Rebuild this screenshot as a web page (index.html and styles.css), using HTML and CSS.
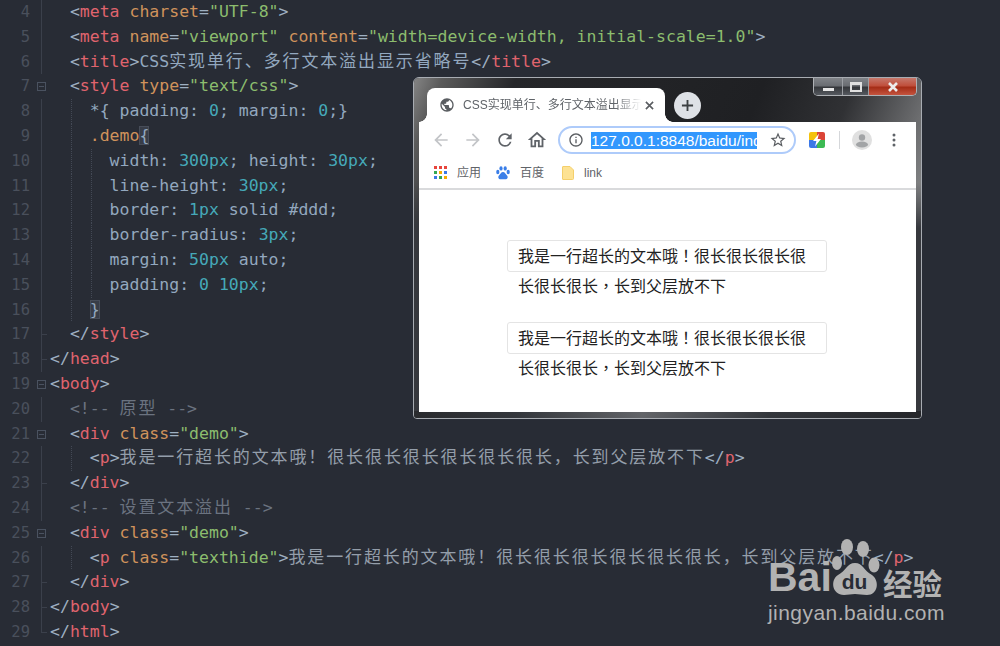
FILE: index.html
```html
<!DOCTYPE html>
<html lang="zh">
<head>
<meta charset="UTF-8">
<title>CSS实现单行、多行文本溢出显示省略号</title>
<link rel="stylesheet" href="styles.css">
</head>
<body>
<main class="editor">
<div class="row"><span class="ln">4</span><span class="fold f-line"></span><code class="src">  <i class="p">&lt;</i><i class="t">meta</i> <i class="a">charset</i><i class="p">=</i><i class="s">"UTF-8"</i><i class="p">&gt;</i></code></div>
<div class="row"><span class="ln">5</span><span class="fold f-line"></span><code class="src">  <i class="p">&lt;</i><i class="t">meta</i> <i class="a">name</i><i class="p">=</i><i class="s">"viewport"</i> <i class="a">content</i><i class="p">=</i><i class="s">"width=device-width, initial-scale=1.0"</i><i class="p">&gt;</i></code></div>
<div class="row"><span class="ln">6</span><span class="fold f-line"></span><code class="src">  <i class="p">&lt;</i><i class="t">title</i><i class="p">&gt;</i><i class="x">CSS<span class="cn">实现单行、多行文本溢出显示省略号</span></i><i class="p">&lt;/</i><i class="t">title</i><i class="p">&gt;</i></code></div>
<div class="row"><span class="ln">7</span><span class="fold f-box"></span><code class="src">  <i class="p">&lt;</i><i class="t">style</i> <i class="a">type</i><i class="p">=</i><i class="s">"text/css"</i><i class="p">&gt;</i></code></div>
<div class="row g1"><span class="ln">8</span><span class="fold f-line"></span><code class="src">    <i class="x">*{ padding: </i><i class="n">0</i><i class="x">; margin: </i><i class="n">0</i><i class="x">;}</i></code></div>
<div class="row g1"><span class="ln">9</span><span class="fold f-line"></span><code class="src">    <i class="a">.demo</i><i class="x match">{</i></code></div>
<div class="row g2"><span class="ln">10</span><span class="fold f-line"></span><code class="src">      <i class="x">width: </i><i class="n">300px</i><i class="x">; height: </i><i class="n">30px</i><i class="x">;</i></code></div>
<div class="row g2"><span class="ln">11</span><span class="fold f-line"></span><code class="src">      <i class="x">line-height: </i><i class="n">30px</i><i class="x">;</i></code></div>
<div class="row g2"><span class="ln">12</span><span class="fold f-line"></span><code class="src">      <i class="x">border: </i><i class="n">1px</i><i class="x"> solid #ddd;</i></code></div>
<div class="row g2"><span class="ln">13</span><span class="fold f-line"></span><code class="src">      <i class="x">border-radius: </i><i class="n">3px</i><i class="x">;</i></code></div>
<div class="row g2"><span class="ln">14</span><span class="fold f-line"></span><code class="src">      <i class="x">margin: </i><i class="n">50px</i><i class="x"> auto;</i></code></div>
<div class="row g2"><span class="ln">15</span><span class="fold f-line"></span><code class="src">      <i class="x">padding: </i><i class="n">0 10px</i><i class="x">;</i></code></div>
<div class="row g1"><span class="ln">16</span><span class="fold f-line"></span><code class="src">    <i class="x match">}</i></code></div>
<div class="row"><span class="ln">17</span><span class="fold f-tick"></span><code class="src">  <i class="p">&lt;/</i><i class="t">style</i><i class="p">&gt;</i></code></div>
<div class="row"><span class="ln">18</span><span class="fold f-end"></span><code class="src"><i class="p">&lt;/</i><i class="t">head</i><i class="p">&gt;</i></code></div>
<div class="row"><span class="ln">19</span><span class="fold f-box"></span><code class="src"><i class="p">&lt;</i><i class="t">body</i><i class="p">&gt;</i></code></div>
<div class="row"><span class="ln">20</span><span class="fold f-line"></span><code class="src">  <i class="c">&lt;!-- <span class="cn">原型</span> --&gt;</i></code></div>
<div class="row"><span class="ln">21</span><span class="fold f-box"></span><code class="src">  <i class="p">&lt;</i><i class="t">div</i> <i class="a">class</i><i class="p">=</i><i class="s">"demo"</i><i class="p">&gt;</i></code></div>
<div class="row g1"><span class="ln">22</span><span class="fold f-line"></span><code class="src">    <i class="p">&lt;</i><i class="t">p</i><i class="p">&gt;</i><i class="z cn">我是一行超长的文本哦！很长很长很长很长很长很长，长到父层放不下</i><i class="p">&lt;/</i><i class="t">p</i><i class="p">&gt;</i></code></div>
<div class="row"><span class="ln">23</span><span class="fold f-tick"></span><code class="src">  <i class="p">&lt;/</i><i class="t">div</i><i class="p">&gt;</i></code></div>
<div class="row"><span class="ln">24</span><span class="fold f-line"></span><code class="src">  <i class="c">&lt;!-- <span class="cn">设置文本溢出</span> --&gt;</i></code></div>
<div class="row"><span class="ln">25</span><span class="fold f-box"></span><code class="src">  <i class="p">&lt;</i><i class="t">div</i> <i class="a">class</i><i class="p">=</i><i class="s">"demo"</i><i class="p">&gt;</i></code></div>
<div class="row g1"><span class="ln">26</span><span class="fold f-line"></span><code class="src">    <i class="p">&lt;</i><i class="t">p</i> <i class="a">class</i><i class="p">=</i><i class="s">"texthide"</i><i class="p">&gt;</i><i class="z cn">我是一行超长的文本哦！很长很长很长很长很长很长，长到父层放不下</i><i class="p">&lt;/</i><i class="t">p</i><i class="p">&gt;</i></code></div>
<div class="row"><span class="ln">27</span><span class="fold f-tick"></span><code class="src">  <i class="p">&lt;/</i><i class="t">div</i><i class="p">&gt;</i></code></div>
<div class="row"><span class="ln">28</span><span class="fold f-end"></span><code class="src"><i class="p">&lt;/</i><i class="t">body</i><i class="p">&gt;</i></code></div>
<div class="row"><span class="ln">29</span><span class="fold f-last"></span><code class="src"><i class="p">&lt;/</i><i class="t">html</i><i class="p">&gt;</i></code></div>
</main>

<section class="window">
  <div class="controls">
    <span class="ctl ctl-min"><b class="min-glyph"></b></span>
    <span class="ctl ctl-max"><b class="max-glyph"></b></span>
    <span class="ctl ctl-close"><svg class="close-glyph" viewBox="0 0 12 10"><path d="M2 1l8 8M10 1l-8 8"/></svg></span>
  </div>
  <div class="tabstrip">
    <div class="tab">
      <svg class="globe" viewBox="0 0 24 24"><path d="M12 2C6.48 2 2 6.48 2 12s4.48 10 10 10 10-4.48 10-10S17.52 2 12 2zm-1 17.93c-3.95-.49-7-3.85-7-7.93 0-.62.08-1.21.21-1.79L9 15v1c0 1.1.9 2 2 2v1.93zm6.9-2.54c-.26-.81-1-1.39-1.9-1.39h-1v-3c0-.55-.45-1-1-1H8v-2h2c.55 0 1-.45 1-1V7h2c1.1 0 2-.9 2-2v-.41c2.93 1.19 5 4.06 5 7.41 0 2.08-.8 3.97-2.1 5.39z"/></svg>
      <span class="tab-title">CSS实现单行、多行文本溢出显示省略号</span>
      <svg class="tab-x" viewBox="0 0 10 10"><path d="M1 1l8 8M9 1l-8 8"/></svg>
    </div>
    <div class="newtab"><svg viewBox="0 0 14 14"><path d="M7 1v12M1 7h12"/></svg></div>
  </div>
  <div class="toolbar">
    <span class="tb"><svg class="ic dim" viewBox="0 0 24 24"><path d="M20 11H7.83l5.59-5.59L12 4l-8 8 8 8 1.41-1.41L7.83 13H20v-2z"/></svg></span>
    <span class="tb"><svg class="ic dim" viewBox="0 0 24 24"><path d="M4 11h12.17l-5.59-5.59L12 4l8 8-8 8-1.41-1.41L16.17 13H4v-2z"/></svg></span>
    <span class="tb"><svg class="ic" viewBox="0 0 24 24"><path d="M17.65 6.35A7.958 7.958 0 0 0 12 4c-4.42 0-7.99 3.58-7.99 8s3.57 8 7.99 8c3.73 0 6.84-2.55 7.73-6h-2.08A5.99 5.99 0 0 1 12 18c-3.31 0-6-2.69-6-6s2.69-6 6-6c1.66 0 3.14.69 4.22 1.78L13 11h7V4l-2.35 2.35z"/></svg></span>
    <span class="tb"><svg class="ic ic-home" viewBox="0 0 24 24"><path d="M12 5.69l5 4.5V18h-2v-6H9v6H7v-7.81l5-4.5M12 3L2 12h3v8h6v-6h2v6h6v-8h3L12 3z"/></svg></span>
    <div class="omni">
      <svg class="ic-s" viewBox="0 0 24 24"><path d="M11 7h2v2h-2zm0 4h2v6h-2zm1-9C6.48 2 2 6.48 2 12s4.48 10 10 10 10-4.48 10-10S17.52 2 12 2zm0 18c-4.41 0-8-3.59-8-8s3.59-8 8-8 8 3.59 8 8-3.59 8-8 8z"/></svg>
      <span class="url"><span class="url-sel">127.0.0.1:8848/baidu/index.html</span></span>
      <svg class="ic-star" viewBox="0 0 24 24"><path d="M22 9.24l-7.19-.62L12 2 9.19 8.63 2 9.24l5.46 4.73L5.82 21 12 17.27 18.18 21l-1.63-7.03L22 9.24zM12 15.4l-3.76 2.27 1-4.28-3.32-2.88 4.38-.38L12 6.1l1.71 4.04 4.38.38-3.32 2.88 1 4.28L12 15.4z"/></svg>
    </div>
    <span class="tb tb-ext"><svg class="ext" viewBox="0 0 16 16"><rect class="e-y" width="8" height="8"/><rect class="e-r" x="8" width="8" height="8"/><rect class="e-b" y="8" width="8" height="8"/><rect class="e-g" x="8" y="8" width="8" height="8"/><path class="e-w" d="M10 1.5L4 9h3.4L6 14.5 12 7H8.6z"/></svg></span>
    <span class="sep"></span>
    <span class="tb"><svg class="avatar" viewBox="0 0 20 20"><circle class="av-bg" cx="10" cy="10" r="10"/><circle class="av-fg" cx="10" cy="7.5" r="3.2"/><ellipse class="av-fg" cx="10" cy="14.5" rx="6" ry="3"/></svg></span>
    <span class="tb"><svg class="dots" viewBox="0 0 4 14"><circle cx="2" cy="2" r="1.5"/><circle cx="2" cy="7" r="1.5"/><circle cx="2" cy="12" r="1.5"/></svg></span>
  </div>
  <div class="bookmarks">
    <span class="bm">
      <svg class="apps" viewBox="0 0 13 13"><rect class="k-r" width="3" height="3"/><rect class="k-r" x="5" width="3" height="3"/><rect class="k-r" x="10" width="3" height="3"/><rect class="k-g" y="5" width="3" height="3"/><rect class="k-y" x="5" y="5" width="3" height="3"/><rect class="k-b" x="10" y="5" width="3" height="3"/><rect class="k-b" y="10" width="3" height="3"/><rect class="k-g" x="5" y="10" width="3" height="3"/><rect class="k-y" x="10" y="10" width="3" height="3"/></svg>
      <span>应用</span>
    </span>
    <span class="bm">
      <svg class="bpaw" viewBox="0 0 14 14"><ellipse cx="5" cy="2.4" rx="1.6" ry="2.2"/><ellipse cx="9.2" cy="2.4" rx="1.6" ry="2.2"/><ellipse cx="1.8" cy="6" rx="1.6" ry="2.2"/><ellipse cx="12.2" cy="6" rx="1.6" ry="2.2"/><path d="M7 6c-2 0-2.4 2-4 3.4C1.6 10.800 2.400 13.500 5 13.300c1-.1 3-.1 4 0 2.600.2 3.400-2.500 2-3.900C9.400 8 9 6 7 6z"/></svg>
      <span>百度</span>
    </span>
    <span class="bm">
      <svg class="folder" viewBox="0 0 12 14"><path class="fo-b" d="M1 .5h7l3.500 3.500v8.500a1 1 0 0 1-1 1H1a.5.5 0 0 1-.5-.5V1A.5.5 0 0 1 1 .5z"/></svg>
      <span>link</span>
    </span>
  </div>
  <div class="page" lang="zh-TW">
    <div class="demo"><p>我是一行超长的文本哦！很长很长很长很长很长很长，长到父层放不下</p></div>
    <div class="demo"><p>我是一行超长的文本哦！很长很长很长很长很长很长，长到父层放不下</p></div>
  </div>
</section>

<aside class="wm">
  <div class="wm-top">
    <span class="wm-bai">Bai</span>
    <svg class="wm-paw" viewBox="0 0 50 58">
      <ellipse cx="17" cy="8" rx="6" ry="8"/><ellipse cx="33" cy="10" rx="6" ry="8"/><ellipse cx="44" cy="26" rx="5.500" ry="7.500"/><ellipse cx="7" cy="24" rx="5" ry="7"/>
      <path d="M25 24c-8 0-9 8-17 12C0 41 2 56 14 56c4 0 7-1 11-1s7 1 12 1c11 0 13-14 5-20-8-4-9-12-17-12z"/>
      <text class="wm-du" x="24.500" y="50" text-anchor="middle">du</text>
    </svg>
    <span class="wm-cn">经验</span>
  </div>
  <div class="wm-url">jingyan.baidu.com</div>
</aside>
</body>
</html>
```
FILE: styles.css
```css
html, body { margin: 0; padding: 0; height: 100%; overflow: hidden; background: #282c35; }
body { position: relative; font-family: "Liberation Sans", "Noto Sans CJK SC", sans-serif; }
p { margin: 0; }

/* editor */
.editor { font-family: "DejaVu Sans Mono", "Noto Sans CJK SC", monospace; font-size: 16.5px; line-height: 24.8px; }
.row { display: flex; height: 24.8px; }
.ln { width: 30px; text-align: right; color: #4a505c; box-sizing: border-box; font-size: 15.500px; }
.fold { width: 20px; flex: none; position: relative; }
.f-line::before, .f-tick::before, .f-end::before, .f-last::before { content: ""; position: absolute; left: 11px; top: 0; bottom: 0; width: 1px; background: #3b404b; }
.f-last::before { bottom: 12px; }
.f-tick::after, .f-end::after, .f-last::after { content: ""; position: absolute; left: 11px; top: 12px; width: 6px; height: 1px; background: #3b404b; }
.f-box::before { content: ""; position: absolute; left: 7px; top: 8px; width: 7px; height: 7px; border: 1px solid #4a5260; background: linear-gradient(#4a5260, #4a5260) center / 5px 1px no-repeat; }
.src { flex: 1; font: inherit; white-space: pre; }
.src i { font-style: normal; }
.g1 .src { background: repeating-linear-gradient(#434955 0 1px, transparent 1px 2px) 21px 0 / 1px 100% no-repeat; }
.g2 .src { background: repeating-linear-gradient(#434955 0 1px, transparent 1px 2px) 21px 0 / 1px 100% no-repeat, repeating-linear-gradient(#434955 0 1px, transparent 1px 2px) 41px 0 / 1px 100% no-repeat; }
.p { color: #9fb0c2; }
.t { color: #e0646e; }
.a { color: #d0935c; }
.s { color: #8cbd6e; }
.x { color: #93a8bf; }
.n { color: #45a9b9; }
.c { color: #6b7380; }
.z { color: #949eaa; }
.cn { font-family: "Noto Sans CJK SC", sans-serif; font-size: 17px; letter-spacing: 1.88px; line-height: 1; }
.match { background: #383d48; outline: 1px solid #474d59; outline-offset: -1px; }

/* browser window */
.window { position: absolute; left: 413px; top: 77px; width: 509px; height: 342px; box-sizing: border-box; padding: 10px 5px 6px; border: 1px solid #a8acb2; border-radius: 6px 6px 4px 4px; display: flex; flex-direction: column; overflow: hidden; background: #36383d; }
.window::before { content: ""; position: absolute; left: 0; right: 0; top: 0; height: 150px; background: linear-gradient(112deg, #858585 0, #5a5a5a 5%, #26272a 18%, #1f2023 62%, #303134 78%, #6d6e70 92%, #8c8d8e 100%); -webkit-mask-image: linear-gradient(#000 70%, transparent); mask-image: linear-gradient(#000 70%, transparent); }
.window::after { content: ""; position: absolute; left: 0; right: 0; bottom: 0; height: 7px; background: linear-gradient(90deg, #2a2b2e 0, #33363b 20%, #626468 45%, #33363b 70%, #25262a 100%); }
.window > * { position: relative; z-index: 1; }
.controls { position: absolute; right: 4px; top: 0; height: 18px; display: flex; z-index: 2; border: 1px solid #aeb1b5; border-top: 0; border-radius: 0 0 5px 5px; overflow: hidden; box-sizing: border-box; }
.ctl { display: flex; align-items: center; justify-content: center; height: 100%; box-sizing: border-box; border-right: 1px solid #9b9ea3; background: linear-gradient(#808388 0, #6a6d72 45%, #35373b 55%, #565a60 100%); }
.ctl-min { width: 29px; }
.ctl-max { width: 26px; }
.ctl-close { width: 47px; border-right: 0; background: linear-gradient(#c5786c 0, #c04f3c 45%, #a52d17 55%, #c4543f 100%); }
.close-glyph { width: 12px; height: 10px; fill: none; stroke: #ececec; stroke-width: 2.600; }
.min-glyph { width: 11px; height: 3px; margin-top: 6px; background: #e6e6e6; }
.max-glyph { width: 8px; height: 5px; border: 2px solid #e0e0e0; border-top-width: 3px; }

.tabstrip { display: flex; align-items: center; height: 34px; flex: none; padding-left: 8px; }
.tab { position: relative; width: 238px; height: 34px; background: #fff; border-radius: 8px 8px 0 0; display: flex; align-items: center; box-sizing: border-box; padding-left: 12px; }
.tab::before, .tab::after { content: ""; position: absolute; bottom: 0; width: 8px; height: 8px; }
.tab::before { left: -8px; background: radial-gradient(circle at 0 0, transparent 7.500px, #fff 8px); }
.tab::after { right: -8px; background: radial-gradient(circle at 100% 0, transparent 7.500px, #fff 8px); }
.globe { width: 16px; height: 16px; flex: none; fill: #5a5d61; }
.tab-title { width: 178px; margin-left: 8px; font-size: 12px; line-height: 16px; color: #5f6368; white-space: nowrap; overflow: hidden; -webkit-mask-image: linear-gradient(90deg, #000 85%, transparent 100%); mask-image: linear-gradient(90deg, #000 85%, transparent 100%); }
.tab-x { width: 9px; height: 9px; margin-left: 4px; fill: none; stroke: #5a5d61; stroke-width: 1.800; }
.newtab { width: 27px; height: 27px; margin-left: 9px; border-radius: 50%; background: #dee1e6; display: flex; align-items: center; justify-content: center; }
.newtab svg { width: 13px; height: 13px; fill: none; stroke: #3c4043; stroke-width: 2; }

.toolbar { flex: none; height: 36px; background: #fff; display: flex; align-items: center; padding-left: 6px; }
.tb { width: 32px; height: 32px; flex: none; display: flex; align-items: center; justify-content: center; }
.ic { width: 20px; height: 20px; fill: #5f6368; }
.ic-home { width: 22px; height: 22px; }
.ic.dim { fill: #c3c5c8; }
.omni { width: 238px; height: 28px; margin-left: 5px; box-sizing: border-box; border: 2px solid #aecbfa; border-radius: 14px; display: flex; align-items: center; padding-left: 8px; }
.ic-s { width: 16px; height: 16px; flex: none; fill: #5a5d61; }
.url { width: 166px; margin-left: 7px; overflow: hidden; white-space: nowrap; font-size: 15.500px; line-height: 19px; }
.url-sel { background: #3297fd; color: #fff; }
.ic-star { width: 18px; height: 18px; flex: none; margin-left: 12px; fill: #5a5d61; }
.tb-ext { margin-left: 5px; }
.ext { width: 16px; height: 16px; border-radius: 2px; }
.e-y { fill: #f4c20d; } .e-r { fill: #db4437; } .e-b { fill: #3b78e7; } .e-g { fill: #3cba54; } .e-w { fill: #fff; }
.sep { width: 1px; height: 18px; margin: 0 6px; background: #d5d7da; flex: none; }
.avatar { width: 20px; height: 20px; }
.av-bg { fill: #e0e0e0; } .av-fg { fill: #a2a4a6; }
.dots { width: 4px; height: 14px; fill: #5f6368; }

.bookmarks { flex: none; height: 30px; background: #fff; border-bottom: 2px solid #d9dadc; display: flex; align-items: center; padding-left: 15px; font-size: 12px; color: #5f6368; }
.bm { display: flex; align-items: center; gap: 10px; margin-right: 15px; line-height: 16px; padding-bottom: 1px; }
.apps { width: 13px; height: 13px; }
.k-r { fill: #e8453c; } .k-g { fill: #34a853; } .k-y { fill: #f9ab00; } .k-b { fill: #3b78e7; }
.bpaw { width: 14px; height: 14px; fill: #3a7ee8; }
.bm:nth-child(2) { margin-right: 18px; }
.folder { width: 12px; height: 14px; }
.fo-b { fill: #fde293; stroke: #f4cf6b; stroke-width: 1; }

.page { flex: 1; background: #fff; color: #222; font-size: 16px; font-family: "Liberation Sans", "Noto Sans CJK TC", sans-serif; padding-top: 50px; box-sizing: border-box; min-height: 0; }
.demo { width: 298px; height: 30px; line-height: 30px; border: 1px solid #e4e4e4; border-radius: 3px; margin: 0 89px 50px 88px; padding: 0 10px; }
.demo p { padding-top: 1px; }

/* watermark */
.wm { position: absolute; left: 768px; top: 540px; color: #b2b2b2; }
.wm-top { display: flex; align-items: flex-end; height: 57px; }
.wm-bai { font: bold 41px/1 "Liberation Sans", sans-serif; width: 62px; margin-bottom: -1px; }
.wm-paw { width: 50px; height: 58px; flex: none; fill: #b2b2b2; }
.wm-du { font: bold 21px "Liberation Sans", sans-serif; fill: #282c35; }
.wm-cn { font: bold 29.500px/1 "Noto Sans CJK SC", sans-serif; margin-left: 3px; }
.wm-url { font: 21px/24px "Liberation Sans", sans-serif; margin-top: 4px; white-space: nowrap; letter-spacing: .45px; }
```
